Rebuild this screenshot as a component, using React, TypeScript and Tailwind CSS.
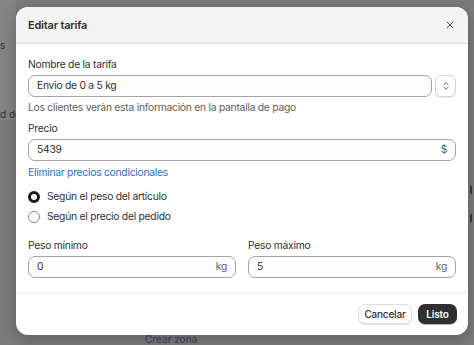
import { X, ChevronsUpDown } from "lucide-react";

const inputBox =
  "flex h-[22px] items-center rounded-[7px] border border-[#a3a3a3] bg-[#fdfdfd] px-[8px] text-[10.3px] tracking-[-0.25px] text-[#303030]";

const Label = ({ children }: { children: React.ReactNode }) => (
  <div className="mb-[3px] h-[16px] text-[10.3px] leading-[16px] tracking-[-0.25px] text-[#303030]">{children}</div>
);

const Radio = ({ checked, label }: { checked?: boolean; label: string }) => (
  <div className="flex h-[16px] items-center gap-[7px] text-[10.3px] tracking-[-0.25px] text-[#303030]">
    <span
      className={
        checked
          ? "h-[12px] w-[12px] rounded-full border-[3.5px] border-[#1a1a1a] bg-white"
          : "h-[12px] w-[12px] rounded-full border border-[#8a8a8a] bg-white"
      }
    />
    {label}
  </div>
);

export default function App() {
  return (
    <div
      className="relative h-[345px] w-[474px] overflow-hidden bg-[#7b7b7b] pl-[16px] pt-[7px]"
      style={{ fontFamily: "Inter, 'Noto Sans', sans-serif" }}
    >
      {/* page behind the backdrop */}
      <div className="absolute left-0 top-0 h-[120px] w-[16px] bg-[#858585]" />
      <div className="absolute left-0 top-[38px] text-[10px] text-[#2e2e2e]">s</div>
      <div className="absolute left-0 top-[107px] text-[10px] text-[#2e2e2e]">d de</div>
      <div className="absolute left-[145px] top-[334px] text-[10px] leading-[11px] font-medium text-[#3e4a5e]">Crear zona</div>
      <div className="absolute right-[2px] top-[186px] h-[8px] w-[2px] bg-[#3a3a3a]" />
      <div className="absolute right-[2px] top-[214px] h-[8px] w-[2px] bg-[#3a3a3a]" />

      <div className="relative flex h-[328px] w-[452px] flex-col overflow-hidden rounded-[12px] bg-white shadow-[0_4px_16px_rgba(0,0,0,0.25)]">
        <div className="flex h-[37px] items-center justify-between border-b border-[#e3e3e3] bg-[#f3f3f3] pl-[12px] pr-[12px]">
          <span className="text-[11px] font-semibold tracking-[-0.2px] text-[#303030]">Editar tarifa</span>
          <X size={12} strokeWidth={1.8} className="text-[#4a4a4a]" />
        </div>

        <div className="flex flex-1 flex-col px-[12px] pt-[12px]">
          <Label>Nombre de la tarifa</Label>
          <div className="flex gap-[3px]">
            <div className={inputBox + " flex-1"}>Envio de 0 a 5 kg</div>
            <div className="flex h-[22px] w-[21px] items-center justify-center rounded-[6px] border border-[#d4d4d4] bg-white shadow-[0_1px_0_rgba(0,0,0,0.08)]">
              <ChevronsUpDown size={10} strokeWidth={2} className="text-[#4a4a4a]" />
            </div>
          </div>
          <div className="mt-[2px] h-[16px] text-[10.3px] leading-[16px] tracking-[-0.25px] text-[#616161]">
            Los clientes verán esta información en la pantalla de pago
          </div>

          <div className="mt-[5px]">
            <Label>Precio</Label>
          </div>
          <div className={inputBox + " justify-between"}>
            <span>5439</span>
            <span className="text-[#616161]">$</span>
          </div>
          <div className="mt-[3px] h-[16px] text-[10.3px] leading-[16px] tracking-[-0.25px] text-[#2c6ecb]">
            Eliminar precios condicionales
          </div>

          <div className="mt-[9px] flex flex-col gap-[4px]">
            <Radio checked label="Según el peso del artículo" />
            <Radio label="Según el precio del pedido" />
          </div>

          <div className="mt-[12px] grid grid-cols-2 gap-[12px]">
            <div>
              <Label>Peso mínimo</Label>
              <div className={inputBox + " justify-between"}>
                <span>0</span>
                <span className="text-[#616161]">kg</span>
              </div>
            </div>
            <div>
              <Label>Peso máximo</Label>
              <div className={inputBox + " justify-between"}>
                <span>5</span>
                <span className="text-[#616161]">kg</span>
              </div>
            </div>
          </div>
        </div>

        <div className="flex h-[43px] items-center justify-end gap-[6px] border-t border-[#ebebeb] px-[11px]">
          <button className="h-[20px] w-[54px] rounded-[7px] border border-[#dcdcdc] bg-white text-[10px] font-medium tracking-[-0.2px] text-[#303030] shadow-[0_1px_0_rgba(0,0,0,0.1)]">
            Cancelar
          </button>
          <button className="h-[20px] w-[39px] rounded-[7px] bg-[#303030] text-[10px] font-semibold tracking-[-0.2px] text-white shadow-[0_1px_0_rgba(0,0,0,0.3)]">
            Listo
          </button>
        </div>
      </div>
    </div>
  );
}
